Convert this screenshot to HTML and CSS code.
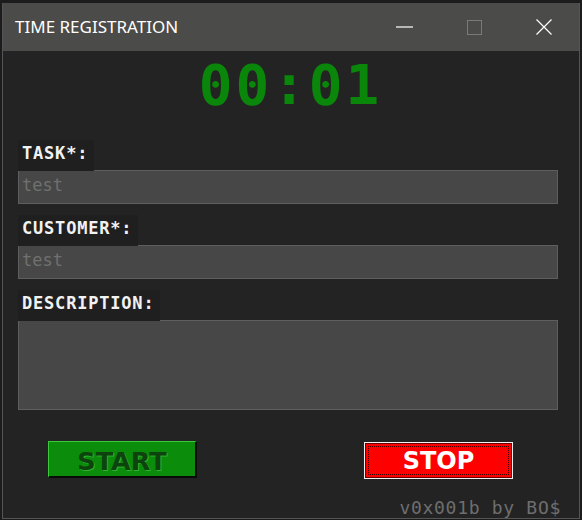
FILE: index.html
```html
<!DOCTYPE html>
<html>
<head>
<meta charset="utf-8">
<link rel="stylesheet" href="styles.css">
</head>
<body>
<div class="window">
  <div class="titlebar">
    <div class="title">TIME REGISTRATION</div>
    <div class="controls">
      <div class="ctl"><svg width="17" height="2" viewBox="0 0 17 2"><line x1="0" y1="1" x2="17" y2="1" stroke="#fff" stroke-width="1.2"/></svg></div>
      <div class="ctl"><svg width="15" height="15" viewBox="0 0 15 15"><rect x="0.5" y="0.5" width="14" height="14" fill="none" stroke="#7a7a7a" stroke-width="1"/></svg></div>
      <div class="ctl"><svg width="16" height="16" viewBox="0 0 16 16"><path d="M0.5 0.5 L15.5 15.5 M15.5 0.5 L0.5 15.5" stroke="#fff" stroke-width="1.2"/></svg></div>
    </div>
  </div>
  <div class="content">
    <div class="timer">00:01</div>
    <div class="form">
      <div class="field">
        <div class="label">TASK*:</div>
        <div class="input">test</div>
      </div>
      <div class="field">
        <div class="label">CUSTOMER*:</div>
        <div class="input">test</div>
      </div>
      <div class="field">
        <div class="label">DESCRIPTION:</div>
        <div class="input area"></div>
      </div>
    </div>
    <div class="buttons">
      <div class="btn start"><span class="txt">START</span></div>
      <div class="btn stop"><span class="focus">STOP</span></div>
    </div>
    <div class="footer">v0x001b by BO$</div>
  </div>
</div>
</body>
</html>
```

FILE: styles.css
```css
html, body {
  margin: 0;
  padding: 0;
  background: #1c1c1c;
}
body {
  width: 582px;
  height: 520px;
  overflow: hidden;
}
.window {
  margin: 3px 0 0 2px;
  width: 578px;
  height: 516px;
  box-sizing: border-box;
  border: 1px solid #555;
  border-top: none;
  background: #232323;
  display: flex;
  flex-direction: column;
}
.titlebar {
  height: 48px;
  background: #4b4b49;
  display: flex;
  align-items: center;
  justify-content: space-between;
  flex: none;
}
.title {
  font-family: "Noto Sans", sans-serif;
  font-size: 17px;
  color: #fff;
  padding-left: 12px;
  padding-bottom: 1px;
}
.controls {
  display: flex;
  height: 100%;
}
.ctl {
  width: 70px;
  display: flex;
  align-items: center;
  justify-content: center;
}
.ctl svg { display: block; }
.content {
  flex: 1;
  display: flex;
  flex-direction: column;
  padding: 0 21px 0 15px;
  position: relative;
}
.timer {
  font-family: "DejaVu Sans Mono", monospace;
  font-weight: bold;
  font-size: 56px;
  letter-spacing: 3px;
  color: #0a870a;
  text-align: center;
  height: 89px;
  line-height: 68px;
  padding-left: 5px;
}
.form {
  display: flex;
  flex-direction: column;
  gap: 11px;
}
.field {
  display: flex;
  flex-direction: column;
}
.label {
  align-self: flex-start;
  font-family: "DejaVu Sans Mono", monospace;
  font-weight: bold;
  font-size: 17px;
  letter-spacing: 0.8px;
  color: #f2f2f2;
  background: #1f1f1f;
  height: 31px;
  line-height: 26px;
  padding: 0 6px 0 4px;
  margin-bottom: -1px;
  position: relative;
  z-index: 1;
}
.input {
  height: 34px;
  box-sizing: border-box;
  border: 1px solid #5e5e5e;
  background: #474747;
  font-family: "DejaVu Sans Mono", monospace;
  font-size: 17px;
  color: #707070;
  line-height: 29px;
  padding-left: 3px;
}
.input.area {
  height: 90px;
}
.buttons {
  display: flex;
  justify-content: space-between;
  padding: 0 45px 0 30px;
  margin-top: 31px;
}
.btn {
  width: 149px;
  height: 37px;
  box-sizing: border-box;
  font-family: "DejaVu Sans", sans-serif;
  font-weight: bold;
  display: flex;
  align-items: center;
  justify-content: center;
}
.start {
  font-size: 25.5px;
  background: #0b8c0b;
  border-top: 1px solid #3cc83c;
  border-left: 1px solid #3cc83c;
  border-right: 2px solid #0a0a0a;
  border-bottom: 2px solid #0a0a0a;
  color: #0d440d;
  text-shadow: 1px 1px 0 #2fb02f;
}
.start .txt {
  padding-top: 4px;
}
.stop {
  font-size: 24px;
  margin-top: 1px;
  background: #ff0000;
  border: 1px solid #f0f0f0;
  box-shadow: inset 0 0 0 1px #700000;
  color: #fff;
  padding: 3px;
}
.focus {
  flex: 1;
  align-self: stretch;
  display: flex;
  align-items: center;
  justify-content: center;
  border: 1px dotted #3a0000;
}
.footer {
  margin-top: auto;
  align-self: flex-end;
  font-family: "DejaVu Sans Mono", monospace;
  font-size: 18px;
  letter-spacing: 0.7px;
  color: #6e6e6e;
  line-height: 20px;
  padding-bottom: 0px;
  margin-right: -3px;
}
```
